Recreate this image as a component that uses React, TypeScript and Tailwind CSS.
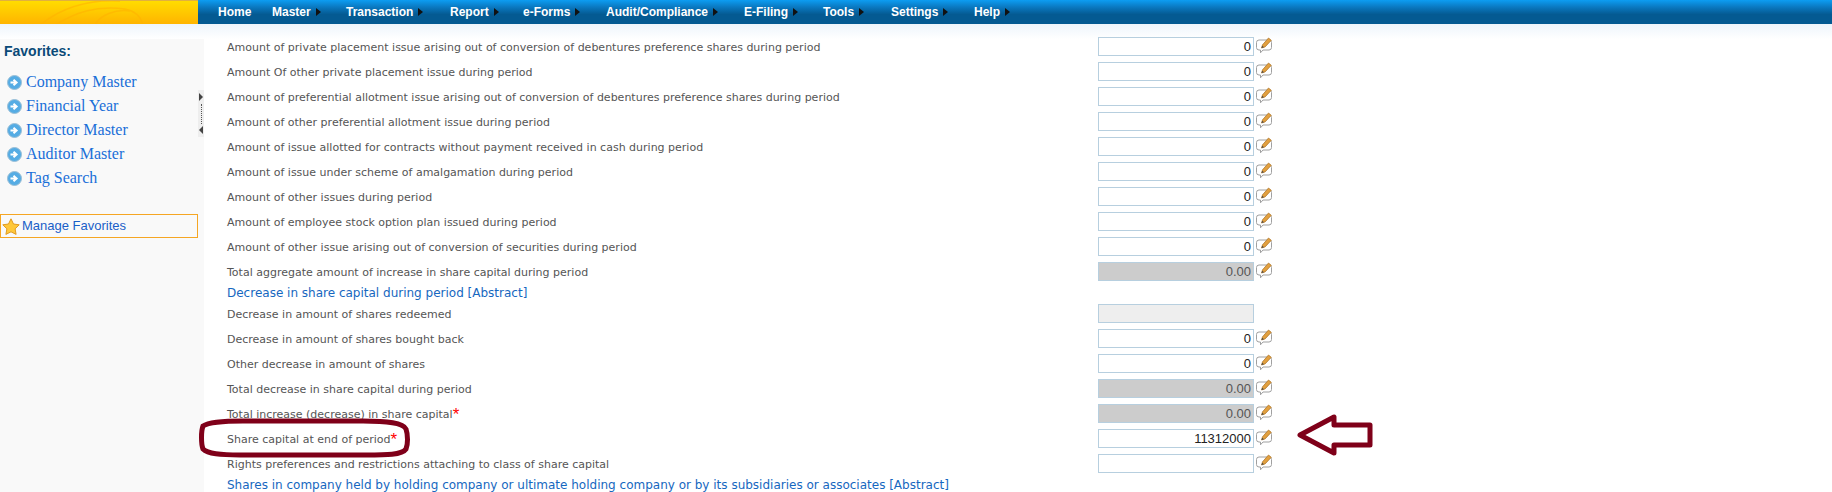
const topRows = [
  "Amount of private placement issue arising out of conversion of debentures preference shares during period",
  "Amount Of other private placement issue during period",
  "Amount of preferential allotment issue arising out of conversion of debentures preference shares during period",
  "Amount of other preferential allotment issue during period",
  "Amount of issue allotted for contracts without payment received in cash during period",
  "Amount of issue under scheme of amalgamation during period",
  "Amount of other issues during period",
  "Amount of employee stock option plan issued during period",
  "Amount of other issue arising out of conversion of securities during period",
];

const menu = [
  { t: "Home", w: "w-[54px]", arrow: false },
  { t: "Master", w: "w-[74px]", arrow: true },
  { t: "Transaction", w: "w-[104px]", arrow: true },
  { t: "Report", w: "w-[73px]", arrow: true },
  { t: "e-Forms", w: "w-[83px]", arrow: true },
  { t: "Audit/Compliance", w: "w-[138px]", arrow: true },
  { t: "E-Filing", w: "w-[79px]", arrow: true },
  { t: "Tools", w: "w-[68px]", arrow: true },
  { t: "Settings", w: "w-[83px]", arrow: true },
  { t: "Help", w: "w-[50px]", arrow: true },
];

const favs = ["Company Master", "Financial Year", "Director Master", "Auditor Master", "Tag Search"];

function NoteIcon() {
  return (
    <svg width="18" height="18" viewBox="0 0 18 18" className="shrink-0">
      <path d="M4 4h10a2.5 2.5 0 0 1 2.5 2.5v5a2.5 2.5 0 0 1-2.5 2.5H8l-2.5 2.8V14H4a2.5 2.5 0 0 1-2.5-2.5v-5A2.5 2.5 0 0 1 4 4z" fill="#fff" stroke="#a0a0a0" strokeWidth="1" />
      <path d="M6.5 12l1-3.2L13.5 2l2.8 2.3-6.2 6.6z" fill="#e2a03f" stroke="#a86f22" strokeWidth="0.7" />
      <path d="M6.5 12l.7-2.2 1.8 1.4z" fill="#4a4a4a" />
    </svg>
  );
}

function GoIcon() {
  return (
    <svg width="15" height="15" viewBox="0 0 15 15" className="shrink-0">
      <circle cx="7.5" cy="7.5" r="7" fill="#55ace4" stroke="#9bbfd6" strokeWidth="1" />
      <path d="M3.5 7.5h5M6.5 4.7L9.6 7.5 6.5 10.3" fill="none" stroke="#fff" strokeWidth="2" />
    </svg>
  );
}

function Row({ label, value, kind = "input", req = false }: { label: string; value?: string; kind?: "input" | "grey" | "off"; req?: boolean }) {
  const box =
    kind === "grey"
      ? "bg-[#cccccc] text-[#555555]"
      : kind === "off"
        ? "bg-[#eeeeee]"
        : "bg-white text-[#222222]";
  return (
    <div className="flex h-[25px] items-start shrink-0">
      <div className="w-[894px] pl-[23px] pt-[2px] h-[21px] flex items-center text-[11px] text-[#555555] font-['DejaVu_Sans',sans-serif] whitespace-nowrap">
        {label}
        {req && <span className="text-[#ff0000] text-[17px] leading-none font-['Liberation_Sans',sans-serif] -mt-[2px]">*</span>}
      </div>
      {kind === "off" ? (
        <div className={`w-[156px] h-[19px] border border-[#b7cfdf] ${box}`} />
      ) : (
        <>
          <div className={`w-[156px] h-[19px] border border-[#b7cfdf] flex items-center justify-end pr-[2px] text-[13px] font-['Liberation_Sans',sans-serif] ${box}`}>
            {value}
          </div>
          <div className="ml-[1px] -mt-[1px]">
            <NoteIcon />
          </div>
        </>
      )}
    </div>
  );
}

function Heading({ children }: { children: string }) {
  return (
    <div className="h-[17px] shrink-0 pl-[23px] flex items-start -mt-[1px] mb-[1px] text-[12px] leading-[15px] text-[#1667c0] font-['DejaVu_Sans',sans-serif] whitespace-nowrap">
      {children}
    </div>
  );
}

export default function App() {
  return (
    <div className="relative w-[1832px] h-[492px] overflow-hidden bg-white font-['Liberation_Sans',sans-serif]">
      <header className="h-[39px] bg-gradient-to-b from-[#d2e4f6] to-white">
        <div className="flex h-[24px]">
          <div className="w-[198px] border-t border-[#e0b040] bg-gradient-to-b from-[#ffdc00] to-[#ffb400] overflow-hidden">
            <svg width="198" height="23" viewBox="0 0 198 23" fill="none" stroke="#ffb000" strokeOpacity="0.55" className="block">
              <path d="M40 24C60 8 85-2 120 0M55 24C75 12 95 4 125 8c10 2 16 8 18 16M95 24c5-10 20-16 35-14" strokeWidth="1.5" />
            </svg>
          </div>
          <nav className="flex-1 flex items-center pl-[20px] bg-[linear-gradient(#0d9df2_0%,#0a78c0_30%,#045a92_60%,#045a92_100%)] text-white text-[12px] font-bold">
            {menu.map((m) => (
              <div key={m.t} className={`flex items-center gap-[5px] shrink-0 ${m.w}`}>
                <span>{m.t}</span>
                {m.arrow && <span className="w-0 h-0 border-y-[4.5px] border-y-transparent border-l-[5px] border-l-[#111111]" />}
              </div>
            ))}
          </nav>
        </div>
      </header>
      <div className="flex h-[453px]">
        <aside className="relative w-[204px] shrink-0 bg-[#f9f9f9]">
          <div className="pl-[4px] pt-[5px] h-[14px] box-content text-[14px] leading-[14px] font-bold text-[#0a4a78]">Favorites:</div>
          <ul className="mt-[12px] pl-[7px] flex flex-col">
            {favs.map((f) => (
              <li key={f} className="h-[24px] flex items-center gap-[4px] text-[16px] text-[#1a6fd8] font-['Liberation_Serif',serif]">
                <GoIcon />
                {f}
              </li>
            ))}
          </ul>
          <div className="mt-[24px] w-[198px] h-[24px] border border-[#f5a623] flex items-center gap-[2px] pl-[1px] text-[13px] text-[#1a5fc8]">
            <svg width="18" height="17" viewBox="0 0 18 17">
              <path d="M9 .8l2.5 5.2 5.7.8-4.1 4 1 5.6L9 13.8l-5.1 2.6 1-5.6-4.1-4 5.7-.8z" fill="#ffc83a" stroke="#e09a20" strokeWidth="1" />
            </svg>
            Manage Favorites
          </div>
          <div className="absolute right-0 top-[51px] w-[6px] h-[47px] bg-[#eeeeee] flex flex-col items-center justify-between py-[3px]">
            <span className="w-0 h-0 border-y-[4px] border-y-transparent border-l-[4px] border-l-[#444444]" />
            <span className="h-[20px] border-l border-dotted border-[#555555]" />
            <span className="w-0 h-0 border-y-[4px] border-y-transparent border-r-[4px] border-r-[#444444]" />
          </div>
        </aside>
        <main className="flex-1 -mt-[2px] flex flex-col">
          {topRows.map((t) => (
            <Row key={t} label={t} value="0" />
          ))}
          <Row label="Total aggregate amount of increase in share capital during period" value="0.00" kind="grey" />
          <Heading>Decrease in share capital during period [Abstract]</Heading>
          <Row label="Decrease in amount of shares redeemed" kind="off" />
          <Row label="Decrease in amount of shares bought back" value="0" />
          <Row label="Other decrease in amount of shares" value="0" />
          <Row label="Total decrease in share capital during period" value="0.00" kind="grey" />
          <Row label="Total increase (decrease) in share capital" value="0.00" kind="grey" req />
          <Row label="Share capital at end of period" value="11312000" req />
          <Row label="Rights preferences and restrictions attaching to class of share capital" />
          <Heading>Shares in company held by holding company or ultimate holding company or by its subsidiaries or associates [Abstract]</Heading>
        </main>
      </div>
      <svg className="absolute left-0 top-0 pointer-events-none" width="1832" height="492" viewBox="0 0 1832 492" fill="none" stroke="#7f0019">
        <path d="M203 426c6-4 20-5 40-5h120c25 0 40 2 43 8 2 6 2 15 0 20-4 6-20 6-40 6H240c-20 0-32-1-37-6-2-5-2-18 0-23z" strokeWidth="5" />
        <path d="M1300 435l34-18v8h36v20h-36v8z" strokeWidth="5" strokeLinejoin="round" />
      </svg>
    </div>
  );
}
